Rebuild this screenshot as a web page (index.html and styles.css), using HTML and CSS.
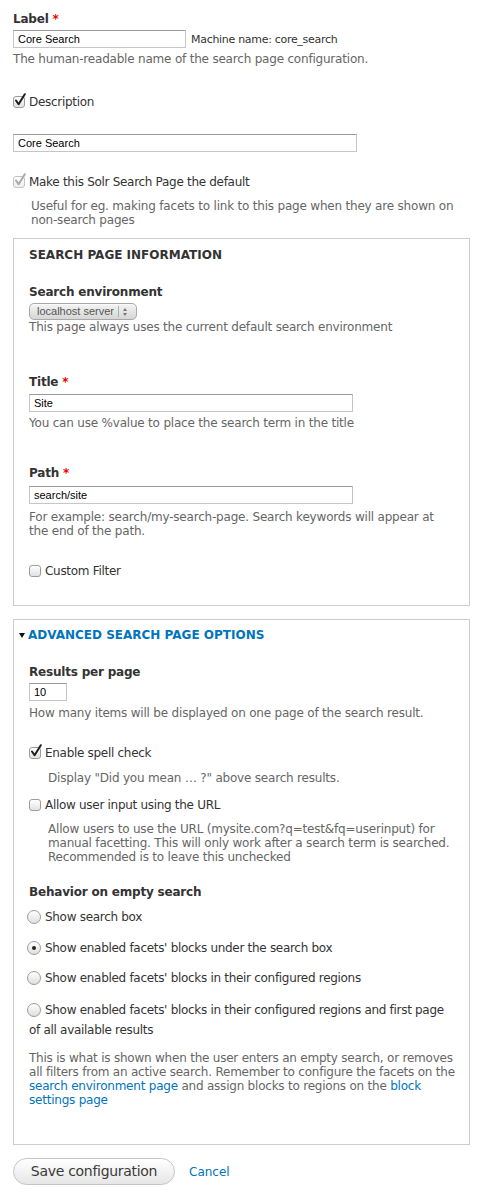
FILE: index.html
```html
<!DOCTYPE html>
<html>
<head>
<meta charset="utf-8">
<link rel="stylesheet" href="styles.css">
</head>
<body>
<form class="page">
  <div class="item">
    <div class="title">Label <span class="req">*</span></div>
    <div class="inline-row">
      <input class="text w-label" type="text" value="Core Search">
      <span class="machine">Machine name: core_search</span>
    </div>
    <div class="description">The human-readable name of the search page configuration.</div>
  </div>

  <div class="check-row m-desc-cb">
    <span class="cb"><svg width="12" height="14" viewBox="0 0 12 14"><path d="M2 7.5 L4.6 11.2 L10.8 1.2" fill="none" stroke="#1e1e1e" stroke-width="2" stroke-linecap="round" stroke-linejoin="round"/></svg></span>
    <span class="cb-label">Description</span>
  </div>

  <input class="text w-desc m-desc-input" type="text" value="Core Search">

  <div class="check-row m-default">
    <span class="cb disabled"><svg width="12" height="14" viewBox="0 0 12 14"><path d="M2 7.5 L4.6 11.2 L10.8 1.2" fill="none" stroke="#a9a9a9" stroke-width="2" stroke-linecap="round" stroke-linejoin="round"/></svg></span>
    <span class="cb-label">Make this Solr Search Page the default</span>
  </div>
  <div class="description cb-desc m-default-desc">Useful for eg. making facets to link to this page when they are shown on non-search pages</div>

  <div class="fieldset fs-info">
    <div class="legend">SEARCH PAGE INFORMATION</div>

    <div class="title m-env">Search environment</div>
    <div class="select">
      <span class="select-text">localhost server</span>
      <span class="select-sep"></span>
      <span class="select-arrows"><span class="arr-up"></span><span class="arr-down"></span></span>
    </div>
    <div class="description m-env-desc">This page always uses the current default search environment</div>

    <div class="title m-title">Title <span class="req">*</span></div>
    <input class="text w-field m-title-input" type="text" value="Site">
    <div class="description m-title-desc">You can use %value to place the search term in the title</div>

    <div class="title m-path">Path <span class="req">*</span></div>
    <input class="text w-field m-path-input" type="text" value="search/site">
    <div class="description m-path-desc">For example: search/my-search-page. Search keywords will appear at the end of the path.</div>

    <div class="check-row m-filter">
      <span class="cb"></span>
      <span class="cb-label">Custom Filter</span>
    </div>
  </div>

  <div class="fieldset fs-adv">
    <div class="legend link-legend"><span class="tri"></span><a href="#" class="legend-link">ADVANCED SEARCH PAGE OPTIONS</a></div>

    <div class="title m-results">Results per page</div>
    <input class="text w-num m-results-input" type="text" value="10">
    <div class="description m-results-desc">How many items will be displayed on one page of the search result.</div>

    <div class="check-row m-spell">
      <span class="cb"><svg width="12" height="14" viewBox="0 0 12 14"><path d="M2 7.5 L4.6 11.2 L10.8 1.2" fill="none" stroke="#1e1e1e" stroke-width="2" stroke-linecap="round" stroke-linejoin="round"/></svg></span>
      <span class="cb-label">Enable spell check</span>
    </div>
    <div class="description cb-desc2 m-spell-desc">Display "Did you mean … ?" above search results.</div>

    <div class="check-row m-url">
      <span class="cb"></span>
      <span class="cb-label">Allow user input using the URL</span>
    </div>
    <div class="description cb-desc2 m-url-desc">Allow users to use the URL (mysite.com?q=test&amp;fq=userinput) for manual facetting. This will only work after a search term is searched. Recommended is to leave this unchecked</div>

    <div class="title m-behavior">Behavior on empty search</div>
    <div class="radio-item m-r1"><span class="rb"></span><span class="rb-label">Show search box</span></div>
    <div class="radio-item m-r2"><span class="rb on"></span><span class="rb-label">Show enabled facets' blocks under the search box</span></div>
    <div class="radio-item m-r3"><span class="rb"></span><span class="rb-label">Show enabled facets' blocks in their configured regions</span></div>
    <div class="radio-item m-r4"><span class="rb"></span><span class="rb-label">Show enabled facets' blocks in their configured regions and first page of all available results</span></div>
    <div class="description m-behavior-desc">This is what is shown when the user enters an empty search, or removes all filters from an active search. Remember to configure the facets on the <a href="#">search environment page</a> and assign blocks to regions on the <a href="#">block settings page</a></div>
  </div>

  <div class="actions">
    <button type="button" class="button">Save configuration</button>
    <a href="#" class="cancel">Cancel</a>
  </div>
</form>
</body>
</html>
```

FILE: styles.css
```css
html, body {
  margin: 0;
  padding: 0;
  background: #fff;
}

body {
  font-family: "DejaVu Sans", Verdana, sans-serif;
  color: #333;
  font-size: 12px;
}

.page {
  width: 457px;
  padding: 11px 0 0 13px;
}

a {
  color: #0074bd;
  text-decoration: none;
}

.title {
  font-weight: bold;
  font-size: 12px;
  letter-spacing: -0.2px;
  line-height: 16px;
  color: #333;
}

.req {
  color: #e00;
  font-weight: bold;
}

.inline-row {
  display: flex;
  align-items: center;
  margin-top: 3px;
}

.text {
  display: block;
  box-sizing: border-box;
  height: 18px;
  margin: 0;
  padding: 0 4px;
  border: 1px solid #c6c6c6;
  border-top-color: #9a9a9a;
  border-radius: 0;
  background: #fff;
  font-family: "Liberation Sans", Arial, sans-serif;
  font-size: 11px;
  color: #000;
  outline: none;
}

.w-label { width: 173px; }
.w-desc { width: 344px; }
.w-field { width: 324px; }
.w-num { width: 38px; }

.machine {
  margin-left: 5px;
  font-size: 11px;
  letter-spacing: -0.3px;
  color: #333;
}

.description {
  font-size: 12px;
  letter-spacing: -0.2px;
  line-height: 14px;
  color: #666;
  margin-top: 4px;
}

.check-row {
  display: flex;
  align-items: center;
  height: 16px;
  line-height: 16px;
  font-size: 12px;
  letter-spacing: -0.3px;
  color: #333;
}

.cb {
  position: relative;
  flex: none;
  box-sizing: border-box;
  width: 12px;
  height: 12px;
  border: 1px solid #9c9c9c;
  border-radius: 3px;
  background: linear-gradient(#fefefe, #e2e2e2);
  box-shadow: inset 0 1px 0 #fff;
}

.cb.disabled {
  border-color: #c4c4c4;
  background: linear-gradient(#fefefe, #eeeeee);
}

.cb svg {
  position: absolute;
  left: 0;
  top: -4px;
}

.cb-label {
  margin-left: 4px;
}

.m-desc-cb { margin-top: 28px; }
.m-desc-input { margin-top: 24px; }
.m-default { margin-top: 22px; }
.m-default-desc { margin-top: 9px; }

.cb-desc { padding-left: 18px; }
.cb-desc2 { padding-left: 19px; }

.fieldset {
  border: 1px solid #ccc;
  padding: 0 14px 0 15px;
}

.fs-info {
  margin-top: 11px;
  padding-top: 8px;
  padding-bottom: 26px;
}

.fs-adv {
  margin-top: 13px;
  padding-top: 7px;
  padding-bottom: 37px;
}

.legend {
  font-weight: bold;
  font-size: 12px;
  line-height: 16px;
  color: #333;
}

.link-legend {
  display: flex;
  align-items: center;
  margin-left: -10px;
}

.tri {
  width: 0;
  height: 0;
  border-left: 3.5px solid transparent;
  border-right: 3.5px solid transparent;
  border-top: 5px solid #111;
  margin: 1px 3px 0 0;
}

.legend-link {
  color: #0074bd;
}

.m-env { margin-top: 21px; }

.select {
  margin-top: 3px;
  box-sizing: border-box;
  width: 108px;
  height: 17px;
  display: flex;
  align-items: center;
  border: 1px solid #a8a8a8;
  border-radius: 5px;
  background: linear-gradient(#f4f4f4, #d6d6d6);
  box-shadow: inset 0 1px 0 #fafafa;
}

.select-text {
  font-family: "Liberation Sans", Arial, sans-serif;
  font-size: 11px;
  color: #555;
  margin-left: 7px;
  line-height: 15px;
}

.select-sep {
  width: 1px;
  height: 11px;
  background: #b0b0b0;
  margin-left: 4px;
}

.select-arrows {
  display: flex;
  flex-direction: column;
  gap: 2px;
  margin-left: 4px;
}

.arr-up {
  width: 0;
  height: 0;
  border-left: 2.5px solid transparent;
  border-right: 2.5px solid transparent;
  border-bottom: 3px solid #777;
}

.arr-down {
  width: 0;
  height: 0;
  border-left: 2.5px solid transparent;
  border-right: 2.5px solid transparent;
  border-top: 3px solid #777;
}

.m-env-desc { margin-top: 0; }
.m-title { margin-top: 40px; }
.m-title-input { margin-top: 4px; }
.m-title-desc { margin-top: 4px; }
.m-path { margin-top: 35px; }
.m-path-input { margin-top: 5px; }
.m-path-desc { margin-top: 6px; }
.m-filter { margin-top: 25px; }

.m-results { margin-top: 21px; }
.m-results-input { margin-top: 3px; }
.m-results-desc { margin-top: 5px; }
.m-spell { margin-top: 25px; }
.m-spell-desc { margin-top: 10px; }
.m-url { margin-top: 12px; }
.m-url-desc { margin-top: 9px; }
.m-behavior { margin-top: 20px; }

.radio-item {
  font-size: 12px;
  letter-spacing: -0.3px;
  line-height: 20px;
  color: #333;
}

.rb {
  display: inline-block;
  position: relative;
  box-sizing: border-box;
  width: 14px;
  height: 14px;
  border: 1px solid #9c9c9c;
  border-radius: 50%;
  background: linear-gradient(#fefefe, #e0e0e0);
  vertical-align: -3px;
  margin-left: -2px;
  margin-right: 4px;
}

.rb.on::after {
  content: "";
  position: absolute;
  left: 4px;
  top: 4px;
  width: 4px;
  height: 4px;
  border-radius: 50%;
  background: #222;
}

.m-r1 { margin-top: 7px; }
.m-r2 { margin-top: 11px; }
.m-r3 { margin-top: 10px; }
.m-r4 { margin-top: 12px; }

.m-behavior-desc {
  margin-top: 11px;
  margin-right: -5px;
  letter-spacing: -0.22px;
}

.actions {
  display: flex;
  align-items: center;
  margin-top: 13px;
}

.button {
  box-sizing: border-box;
  width: 162px;
  height: 27px;
  margin: 0;
  padding: 0 0 1px 0;
  border: 1px solid #c4c4c4;
  border-radius: 14px;
  background: linear-gradient(#ffffff, #e6e6e6);
  font-family: "DejaVu Sans", Verdana, sans-serif;
  font-size: 14px;
  letter-spacing: -0.3px;
  color: #3a3a3a;
  text-align: center;
}

.cancel {
  margin-left: 14px;
  font-size: 12px;
  color: #0074bd;
}
```
